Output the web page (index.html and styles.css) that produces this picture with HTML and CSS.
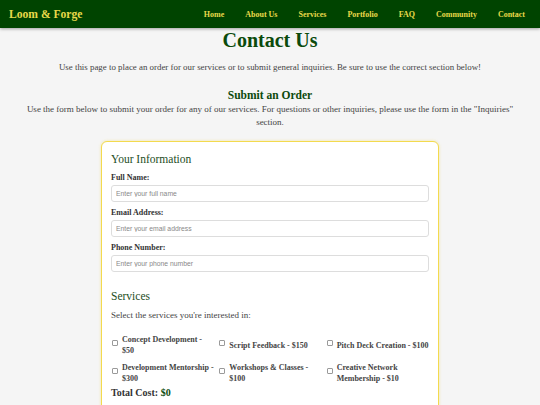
FILE: index.html
```html
<!DOCTYPE html>
<html lang="en">
<head>
<meta charset="utf-8">
<title>Contact Us - Loom &amp; Forge</title>
<link rel="stylesheet" href="styles.css">
</head>
<body>
<header class="site-header">
  <div class="logo">Loom &amp; Forge</div>
  <nav class="nav">
    <a href="#">Home</a>
    <a href="#">About Us</a>
    <a href="#">Services</a>
    <a href="#">Portfolio</a>
    <a href="#">FAQ</a>
    <a href="#">Community</a>
    <a href="#">Contact</a>
  </nav>
</header>
<main class="main">
  <h1 class="title">Contact Us</h1>
  <p class="intro">Use this page to place an order for our services or to submit general inquiries. Be sure to use the correct section below!</p>
  <h2 class="section-title">Submit an Order</h2>
  <p class="section-desc">Use the form below to submit your order for any of our services. For questions or other inquiries, please use the form in the "Inquiries" section.</p>
  <form class="card">
    <h3 class="card-title">Your Information</h3>
    <label class="field-label">Full Name:</label>
    <input class="field" type="text" placeholder="Enter your full name">
    <label class="field-label">Email Address:</label>
    <input class="field" type="email" placeholder="Enter your email address">
    <label class="field-label">Phone Number:</label>
    <input class="field" type="tel" placeholder="Enter your phone number">
    <h3 class="card-title services-title">Services</h3>
    <p class="select-text">Select the services you're interested in:</p>
    <div class="services">
      <label class="service"><input type="checkbox" class="check"><span>Concept Development - $50</span></label>
      <label class="service"><input type="checkbox" class="check"><span>Script Feedback - $150</span></label>
      <label class="service"><input type="checkbox" class="check"><span>Pitch Deck Creation - $100</span></label>
      <label class="service"><input type="checkbox" class="check"><span>Development Mentorship - $300</span></label>
      <label class="service"><input type="checkbox" class="check"><span>Workshops &amp; Classes - $100</span></label>
      <label class="service"><input type="checkbox" class="check"><span>Creative Network Membership - $10</span></label>
    </div>
    <p class="total">Total Cost: <span class="total-value">$0</span></p>
  </form>
</main>
</body>
</html>
```

FILE: styles.css
```css
* { box-sizing: border-box; }
html, body { margin: 0; padding: 0; }
body {
  background: #f5f5f5;
  font-family: "Liberation Serif", Georgia, serif;
  color: #444;
}
.site-header {
  height: 28px;
  background: #004400;
  display: flex;
  align-items: center;
  justify-content: space-between;
  padding: 0 15px 0 9px;
  box-shadow: 0 1px 3px rgba(0,0,0,0.35);
  position: relative;
  z-index: 1;
}
.logo {
  color: #e8d94a;
  font-weight: bold;
  font-size: 11.6px;
}
.nav { display: flex; gap: 21px; }
.nav a {
  color: #e8d94a;
  text-decoration: none;
  font-weight: bold;
  font-size: 8px;
}
.main { text-align: center; padding: 0 20px; }
.title {
  color: #0b4a0b;
  font-size: 20px;
  margin: 1px 0 0;
  line-height: 22px;
}
.intro {
  font-size: 8.9px;
  margin: 10px 0 0;
  line-height: 12px;
}
.section-title {
  color: #0b4a0b;
  font-size: 11.5px;
  margin: 15px 0 0;
  line-height: 14px;
}
.section-desc {
  font-size: 9px;
  line-height: 13px;
  margin: 1px 0 0;
}
.card {
  width: 338px;
  margin: 12px auto 0;
  background: #fff;
  border: 1.5px solid #f3da4e;
  border-radius: 6px;
  box-shadow: 0 0 3px rgba(240, 210, 60, 0.45);
  padding: 9px 9px 20px;
  text-align: left;
}
.card-title {
  color: #1d4d1d;
  font-weight: normal;
  font-size: 11.5px;
  margin: 1px 0 0;
  line-height: 14px;
}
.field-label {
  display: block;
  font-weight: bold;
  font-size: 8px;
  color: #333;
  margin-top: 6px;
  line-height: 10px;
}
.field-label:first-of-type { margin-top: 7px; }
.field {
  display: block;
  width: 100%;
  height: 17px;
  margin-top: 2px;
  border: 1px solid #ddd;
  border-radius: 3px;
  padding: 0 4px;
  font-family: "Liberation Sans", Arial, sans-serif;
  font-size: 6.8px;
  color: #333;
}
.field::placeholder { color: #888; }
.services-title { margin-top: 17px; }
.select-text {
  font-size: 9px;
  margin: 6px 0 0;
  line-height: 12px;
}
.services {
  display: grid;
  grid-template-columns: repeat(3, 1fr);
  gap: 6px 4px;
  margin-top: 13px;
}
.service {
  display: flex;
  align-items: flex-start;
  font-weight: bold;
  font-size: 8px;
  line-height: 11px;
  color: #444;
}
.service span { align-self: center; }
.check {
  appearance: none;
  -webkit-appearance: none;
  width: 6px;
  height: 6px;
  margin: 6px 4px 0 1px;
  border: 1px solid #9a9a9a;
  border-radius: 1px;
  background: #fff;
  flex: none;
}
.total {
  font-weight: bold;
  font-size: 10px;
  color: #333;
  margin: 3px 0 0;
}
.total-value { color: #0b4a0b; }
```
